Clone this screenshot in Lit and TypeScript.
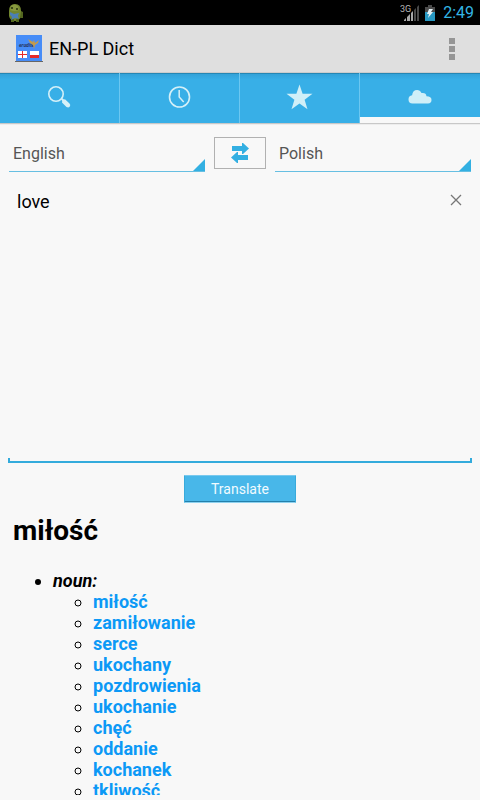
import { LitElement, html, css, svg } from "lit";
import { customElement, property, state } from "lit/decorators.js";
import { classMap } from "lit/directives/class-map.js";

const base = css`
  * { box-sizing: border-box; }
  svg { display: block; }
  button, select, textarea { font-family: inherit; margin: 0; border-radius: 0; }
`;

@customElement("status-bar")
class StatusBar extends LitElement {
  static styles = [base, css`
    :host { display: block; }
    .bar { height: 25px; padding: 0 6px 0 7px; background: #000; color: #33b5e5; display: flex; align-items: center; }
    .tray { margin-left: auto; display: flex; align-items: center; }
    .battery { margin: 0 8px 0 6px; }
    .label { font: 9px Roboto, sans-serif; fill: #b5b5b5; }
    time { font-size: 16px; line-height: 25px; }
  `];
  render() {
    return html`<div class="bar">
      <svg width="18" height="20" viewBox="0 0 18 20" role="img" aria-label="Android">
        <path d="M2 8Q2 1 8 1t6 7v5q-1 5-6 5t-6-5z" fill="#71862f" />
        <path d="M4 3q3-3 7 0l1 4q-4 2-9 0z" fill="#87993f" />
        <path d="M14 8l2 1v6h-3M4 15v4h3v-3M9 16v3h3v-4" fill="#52651f" />
        <circle cx="5" cy="5" r="1" fill="#26300f" /><circle cx="10" cy="6" r="1" fill="#26300f" />
        <path d="M3 9l4 2 5-1-1 3 1 3-4-1-4 2 1-3-2-2z" fill="#4a7fb5" />
      </svg>
      <div class="tray">
        <svg width="19" height="18" viewBox="0 0 19 18" role="img" aria-label="3G signal">
          <text class="label" x="0" y="8">3G</text>
          <path d="M4 17v-1l2-2v3zM7 17v-4l3-3v7zM11 17V9l2-2v10z" fill="#a8a8a8" />
          <path d="M14 17V6l2-2v13zM17 17V3l2-2v16z" fill="#484848" />
        </svg>
        <svg class="battery" width="10" height="16" viewBox="0 0 10 16" role="img" aria-label="Battery charging">
          <path d="M0 2h3V0h4v2h3v5H0z" fill="#4b4b4b" /><path d="M0 7h10v9H0z" fill="#2898c2" />
          <path d="M4 4h4L6 7h2l-5 6 1-4H2z" fill="#e4f1f5" />
        </svg>
        <time>2:49</time>
      </div>
    </div>`;
  }
}

@customElement("title-bar")
class TitleBar extends LitElement {
  static styles = [base, css`
    :host { display: block; }
    header { height: 48px; padding: 1px 12px 0 14px; background: #dfdfdf; border-bottom: 1px solid #ccc; display: flex; align-items: center; gap: 5px; }
    h1 { margin: 0; flex: 1; font-size: 18px; line-height: 24px; font-weight: 400; color: #000; }
    .brand { font: italic 700 5px Roboto, sans-serif; fill: #27345e; }
    button { border: 0; padding: 0; background: none; width: 32px; height: 40px; display: grid; place-items: center; }
  `];
  render() {
    return html`<header>
      <svg width="30" height="30" viewBox="0 0 30 30" role="img" aria-label="Dictionary logo">
        <path d="M2 1h26v26H2z" fill="#468cf7" /><path d="M1 27h28v1H1z" fill="#666" />
        <text class="brand" x="5" y="13">erudite</text>
        <path d="M14 5l5 3 1-2 1 3 4-3-1 3-3 2-1 4-1-4-3-2z" fill="#c39b4b" />
        <path d="M4 17h9v7H4zM16 17h9v4h-9z" fill="#fff" />
        <path d="M8 17h1v7H8zM4 20h9v1H4zM16 21h9v3h-9z" fill="#e32a2a" />
      </svg>
      <h1>EN-PL Dict</h1>
      <button type="button" aria-label="More options">
        <svg width="6" height="22" viewBox="0 0 6 22"><path d="M0 0h6v6H0zM0 8h6v6H0zM0 16h6v6H0z" fill="#969696" /></svg>
      </button>
    </header>`;
  }
}

const tabs = [
  { label: "Search", icon: svg`<circle cx="10" cy="10" r="7.200" fill="none" stroke="#d5f0f8" stroke-width="1.6"/><path d="M15 15l1-1 2 1.500 1-.2 4.500 4.200q1.500 1.500.3 3t-3.300.5L16 18.500l.2-1.500z" fill="#d5f0f8"/>` },
  { label: "History", icon: svg`<circle cx="13.500" cy="13" r="10" fill="none" stroke="#d5f0f8" stroke-width="1.6"/><path d="M13.200 6v7l4.500 5" fill="none" stroke="#d5f0f8" stroke-width="1.5"/>` },
  { label: "Favourites", icon: svg`<path d="M13.500.500l3.100 9.300h9.900l-7.900 5.900 2.900 9.500-8-5.700-8 5.700 2.900-9.500L.5 9.800h9.900z" fill="#d0eff8"/>` },
  { label: "Online", icon: svg`<path d="M6.500 20.500q-4-.2-4-4t3.600-4.200q.6-5.200 5-5.200 3 0 4.400 3 4.500-.8 5 3.200 5 .2 5 3.600t-3.500 3.600z" fill="#d0eff8"/>` },
];

@customElement("tab-strip")
class TabStrip extends LitElement {
  @state() selected = 3;
  static styles = [base, css`
    :host { display: block; }
    nav { display: grid; grid-template-columns: repeat(4, 1fr); height: 52px; border-bottom: 1px solid #ededed; background: #39b0e8; box-shadow: inset 0 -1px #c8c8c8; }
    button { border: 0; border-right: 1px solid #6cc7f1; padding: 0 0 3px; background: linear-gradient(#2587b5 0 1px, #33a2d8 1px, #38afe7 7px); margin-bottom: 1px; display: grid; place-items: center; }
    button:last-child { border-right: 0; }
    .active { border-bottom: 6px solid #f8f8f8; padding: 0; }
    .active svg { margin-top: 2px; }
  `];
  render() {
    return html`<nav>${tabs.map((t, i) => html`
      <button type="button" class=${classMap({ active: i === this.selected })} aria-label=${t.label} @click=${() => (this.selected = i)}>
        <svg width="28" height="26" viewBox="0 0 28 26">${t.icon}</svg>
      </button>`)}</nav>`;
  }
}

@customElement("language-select")
class LanguageSelect extends LitElement {
  @property() label = "";
  @property() value = "";
  static styles = [base, css`
    :host { display: block; flex: 1; min-width: 0; }
    .field { display: grid; background: linear-gradient(#67bfe2, #67bfe2) bottom / 100% 1px no-repeat; padding-bottom: 1px; }
    select, svg { grid-area: 1 / 1; }
    select { appearance: none; width: 100%; height: 34px; border: 0; padding: 0 16px 0 4px; background: none; font-size: 16px; line-height: 24px; color: #555; }
    svg { place-self: end; pointer-events: none; }
  `];
  render() {
    return html`<div class="field">
      <select aria-label=${this.label}>
        ${["English", "Polish"].map(l => html`<option ?selected=${l === this.value}>${l}</option>`)}
      </select>
      <svg width="12" height="12" viewBox="0 0 12 12"><path d="M12 0v12H0z" fill="#33b0e2" /></svg>
    </div>`;
  }
}

@customElement("translate-form")
class TranslateForm extends LitElement {
  @state() text = "love";
  static styles = [base, css`
    :host { display: block; }
    form { padding: 12px 8px 0; display: flex; flex-direction: column; }
    .languages { display: flex; gap: 9px; padding: 0 1px; }
    .swap { width: 52px; height: 32px; padding: 0; border: 1px solid #b1b1b1; background: none; display: grid; place-items: center; }
    .entry { display: grid; margin-top: 12px; }
    textarea { grid-area: 1 / 1; width: 100%; min-height: 279px; border: 0; padding: 6px 36px 6px 9px; resize: none; outline: 0; font-size: 18px; line-height: 24px; color: #000;
      background: linear-gradient(#33abdc, #33abdc) bottom / 100% 2px no-repeat, linear-gradient(#33abdc, #33abdc) left bottom / 2px 5px no-repeat, linear-gradient(#33abdc, #33abdc) right bottom / 2px 5px no-repeat; }
    .clear { grid-area: 1 / 1; place-self: start end; width: 32px; height: 32px; padding: 0; border: 0; background: none; display: grid; place-items: center; }
    .submit { align-self: center; margin-top: 12px; width: 112px; height: 28px; padding: 0; border: 1px solid #39aadb; border-top-color: #79c9ee; border-bottom: 1px solid #8fd2ef; box-shadow: inset 0 -1px #2480ab; border-radius: 1px; background: #48b7e9; color: #f1fbff; font-size: 14px; line-height: 24px; }
  `];
  render() {
    return html`<form @submit=${(e: Event) => e.preventDefault()}>
      <div class="languages">
        <language-select label="From" value="English"></language-select>
        <button class="swap" type="button" aria-label="Swap languages">
          <svg width="18" height="20" viewBox="0 0 18 20"><path d="M1 3h10V0h1l6 5.500-6 5.500h-1V8H1zM17 12H7V9H6L0 14.500 6 20h1v-3h10z" fill="#33afe2" /></svg>
        </button>
        <language-select label="To" value="Polish"></language-select>
      </div>
      <div class="entry">
        <textarea aria-label="Text to translate" spellcheck="false" .value=${this.text} @input=${(e: Event) => (this.text = (e.target as HTMLTextAreaElement).value)}></textarea>
        <button class="clear" type="button" aria-label="Clear text" @click=${() => (this.text = "")}>
          <svg width="12" height="12" viewBox="0 0 12 12"><path d="M1 1l10 10M11 1L1 11" stroke="#777" stroke-width="1.3" /></svg>
        </button>
      </div>
      <button class="submit" type="submit">Translate</button>
    </form>`;
  }
}

const nouns = ["miłość", "zamiłowanie", "serce", "ukochany", "pozdrowienia", "ukochanie", "chęć", "oddanie", "kochanek", "tkliwość"];

@customElement("result-list")
class ResultList extends LitElement {
  static styles = [base, css`
    :host { display: block; flex: 1; min-height: 0; overflow: hidden; color: #000; font-size: 18px; line-height: 21px; font-weight: 700; }
    h2 { margin: 11px 13px 22px; font-size: 28px; line-height: 34px; }
    ul { margin: 0; padding: 0 0 0 53px; list-style: disc; }
    ul ul { padding-left: 40px; list-style: circle; }
    li::marker { font-weight: 400; }
    a { color: #0c99f6; text-decoration: none; }
  `];
  render() {
    return html`<h2>miłość</h2>
      <ul><li><em>noun:</em>
        <ul>${nouns.map(n => html`<li><a href="#${n}">${n}</a></li>`)}</ul>
      </li></ul>`;
  }
}

@customElement("app-root")
class AppRoot extends LitElement {
  static styles = css`
    :host { display: flex; flex-direction: column; box-sizing: border-box; height: 100vh; padding-bottom: 5px; background: #f8f8f8; font-family: Roboto, sans-serif; }
  `;
  render() {
    return html`<status-bar></status-bar><title-bar></title-bar><tab-strip></tab-strip>
      <translate-form></translate-form><result-list></result-list>`;
  }
}
